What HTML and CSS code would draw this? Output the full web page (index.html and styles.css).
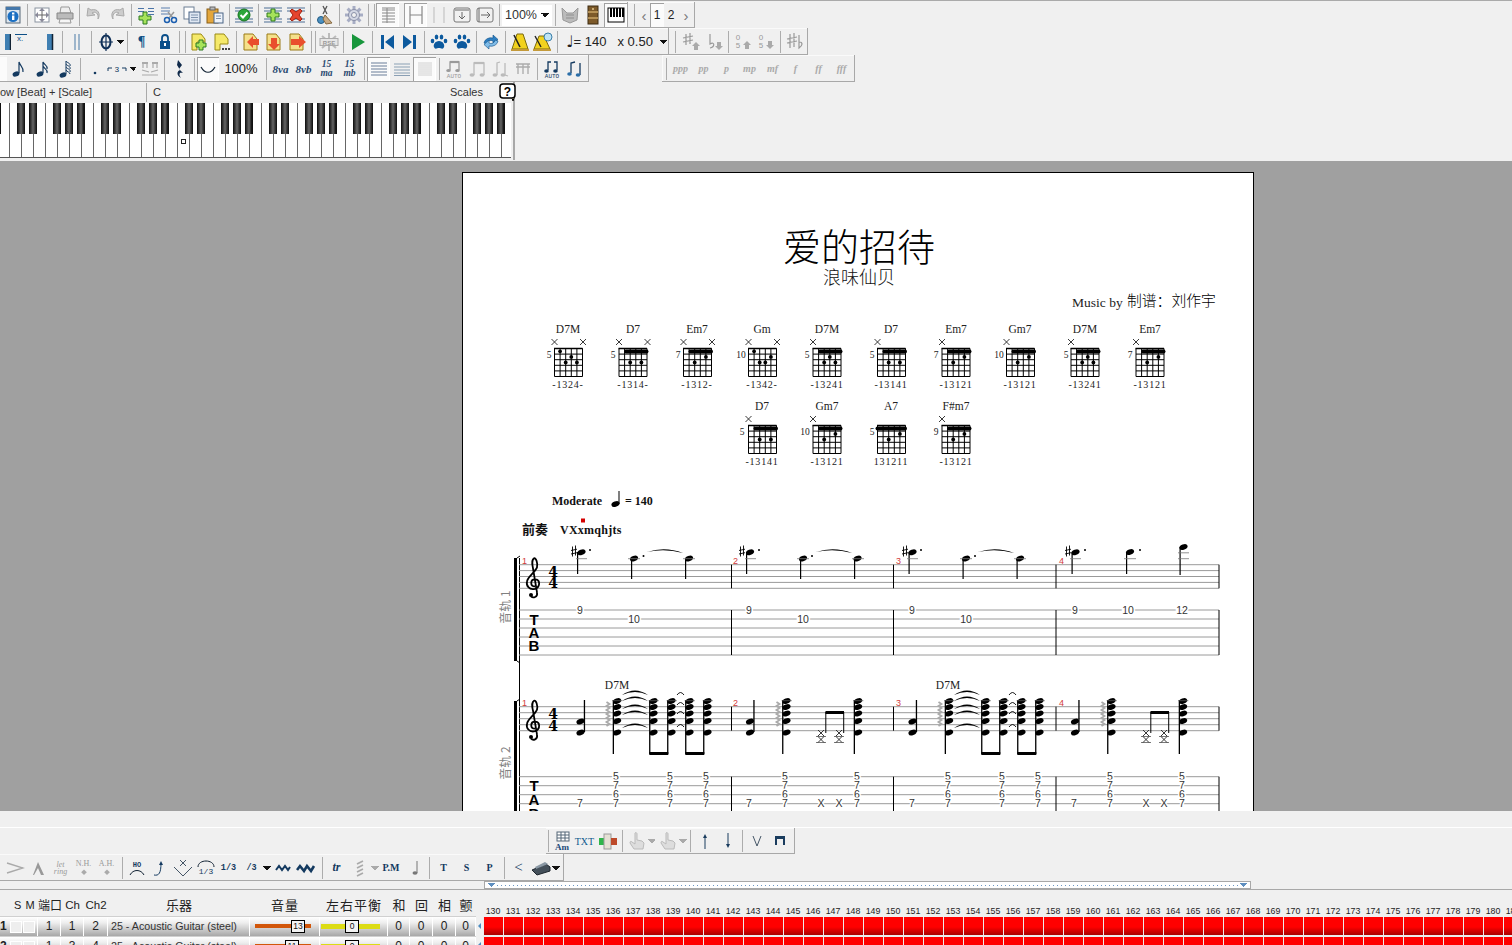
FILE: index.html
```html
<!DOCTYPE html>
<html lang="zh">
<head>
<meta charset="utf-8">
<title>爱的招待</title>
<link rel="stylesheet" href="styles.css">
</head>
<body>
<svg class="sprite" aria-hidden="true">
<defs>
<symbol id="info" viewBox="0 0 20 20"><rect x="3" y="2" width="14" height="16" fill="#dde6ef" stroke="#567"/><rect x="3" y="2" width="14" height="3" fill="#47a"/><circle cx="10" cy="11.5" r="5.5" fill="#1b6fc2"/><rect x="9" y="10.5" width="2.4" height="4.5" fill="#fff"/><rect x="9" y="7.5" width="2.4" height="2" fill="#fff"/></symbol>
<symbol id="move" viewBox="0 0 20 20"><rect x="3" y="3" width="14" height="14" fill="#fff" stroke="#8a93a0"/><path d="M10 3.5v13M3.5 10h13" stroke="#666"/><path d="M10 3l-3 3h6zM10 17l-3-3h6zM3 10l3-3v6zM17 10l-3-3v6z" fill="#889"/></symbol>
<symbol id="print" viewBox="0 0 20 20"><path d="M6 2h8l2 6H5z" fill="#eee" stroke="#999"/><path d="M2 8h16v6H2z" fill="#bbb" stroke="#888"/><path d="M5 14h10l1 4H4z" fill="#f6f6f6" stroke="#999"/></symbol>
<symbol id="undo" viewBox="0 0 20 20"><path d="M4 3l-1 8 8-1-3-2c3-2 7 0 6 6 3-5 0-11-7-9z" fill="#ccc" stroke="#aaa"/></symbol>
<symbol id="redo" viewBox="0 0 20 20"><path d="M16 3l1 8-8-1 3-2c-3-2-7 0-6 6-3-5 0-11 7-9z" fill="#ccc" stroke="#aaa"/></symbol>
<symbol id="addt" viewBox="0 0 20 20"><path d="M2 3.5h6M12 3.5h6M2 6.5h6M12 6.5h6M12 9.5h6" stroke="#4a74a8"/><path d="M7 7h4v4h4v4h-4v4H7v-4H3v-4h4z" fill="#a6e35a" stroke="#2c7a22"/></symbol>
<symbol id="scis" viewBox="0 0 20 20"><path d="M2 3h9M2 6h9M2 9h9" stroke="#5a7fae"/><path d="M9 7l5 6M15 7l-5 6" stroke="#999" stroke-width="1.5"/><circle cx="8" cy="15" r="2.5" fill="none" stroke="#1c5fb0" stroke-width="1.5"/><circle cx="15" cy="15" r="2.5" fill="none" stroke="#1c5fb0" stroke-width="1.5"/></symbol>
<symbol id="copy" viewBox="0 0 20 20"><rect x="2" y="2" width="10" height="12" fill="#fff" stroke="#6d7f94"/><rect x="7" y="7" width="11" height="11" fill="#dfe7f2" stroke="#4a6486"/><path d="M9 10h7M9 12.5h7M9 15h7" stroke="#7f93ad"/></symbol>
<symbol id="paste" viewBox="0 0 20 20"><rect x="2" y="4" width="11" height="14" fill="#e3a63c" stroke="#8a5e16"/><rect x="5" y="2" width="5" height="3" fill="#bbb" stroke="#666"/><rect x="9" y="8" width="9" height="10" fill="#eef3fa" stroke="#4a6486"/><path d="M11 11h5M11 13.5h5" stroke="#7f93ad"/></symbol>
<symbol id="chk" viewBox="0 0 20 20"><path d="M1 3h18M1 6h18M1 14h18M1 17h18" stroke="#4d6f95"/><circle cx="10" cy="10" r="6" fill="#2ca53a" stroke="#14721f"/><path d="M6.5 10l2.5 2.5 4.5-5" stroke="#fff" stroke-width="2" fill="none"/></symbol>
<symbol id="add2" viewBox="0 0 20 20"><path d="M1 3h18M1 6h18M1 14h18M1 17h18" stroke="#4d6f95"/><path d="M8 4h4v4h4v4h-4v4H8v-4H4V8h4z" fill="#a6e35a" stroke="#2c7a22"/></symbol>
<symbol id="del2" viewBox="0 0 20 20"><path d="M1 3h18M1 6h18M1 14h18M1 17h18" stroke="#4d6f95"/><path d="M6 4l4 3 4-3 2 2-3 4 3 4-2 2-4-3-4 3-2-2 3-4-3-4z" fill="#e6442e" stroke="#a3210f"/></symbol>
<symbol id="cut" viewBox="0 0 20 20"><path d="M12 1L8 9M8 1l4 8" stroke="#555" stroke-width="1.3"/><circle cx="6" cy="15" r="3.5" fill="#4a90c2" stroke="#245b82"/><path d="M10 10l7 8-6 1-3-5z" fill="#c9ab85" stroke="#86693f"/></symbol>
<symbol id="gear" viewBox="0 0 20 20"><path d="M10 1v18M1 10h18M3.6 3.6l12.8 12.8M16.4 3.6L3.6 16.4" stroke="#a7adc4" stroke-width="3"/><circle cx="10" cy="10" r="5.5" fill="#d3d7e4" stroke="#8a90a8"/><circle cx="10" cy="10" r="2.5" fill="#f1f1f1" stroke="#8a90a8"/></symbol>
<symbol id="list" viewBox="0 0 20 20"><path d="M4 5h13M4 8h13M4 11h13M4 14h13M4 17h13M9 3v15M4 3h13" stroke="#888"/></symbol>
<symbol id="hh" viewBox="0 0 20 20"><path d="M4 1v18M16 1v18M4 10h12" stroke="#888" stroke-width="1.2"/></symbol>
<symbol id="vv" viewBox="0 0 20 20"><path d="M5 2v16M15 2v16" stroke="#bbb"/></symbol>
<symbol id="bxd" viewBox="0 0 20 20"><rect x="2" y="3" width="16" height="14" rx="2" fill="#f1f1f1" stroke="#777"/><path d="M3 5h14M10 7v7M7 11l3 3 3-3" stroke="#666" fill="none"/></symbol>
<symbol id="bxr" viewBox="0 0 20 20"><rect x="2" y="3" width="16" height="14" rx="2" fill="#f1f1f1" stroke="#777"/><path d="M4 3v14M6 10h9M12 7l3 3-3 3" stroke="#666" fill="none"/></symbol>
<symbol id="cat" viewBox="0 0 20 20"><path d="M2 3l5 5h6l5-5-1 12-7 3-7-3z" fill="#bbb" stroke="#999"/><path d="M6 10h8M6 13h8" stroke="#8f8f8f"/></symbol>
<symbol id="wood" viewBox="0 0 20 20"><rect x="5" y="1" width="10" height="18" fill="#7d5a2a" stroke="#3d2a10"/><path d="M5 7h10M5 13h10" stroke="#c9a566" stroke-width="1.6"/><circle cx="10" cy="4" r="1" fill="#e5c88e"/></symbol>
<symbol id="kb" viewBox="0 0 20 20"><rect x="2" y="3" width="16" height="14" fill="#fff" stroke="#000"/><path d="M5 3v9M8 3v9M11 3v9M14 3v9M17 3v9" stroke="#000" stroke-width="2"/></symbol>
<symbol id="rs" viewBox="0 0 20 20"><path d="M2 2h12v1H2z" fill="#0d4f86"/><text x="4" y="9" class="svt">x.</text></symbol>
<symbol id="rr" viewBox="0 0 20 20"><path d="M4 7h.01M4 13h.01" stroke="#0d4f86" stroke-width="2"/><path d="M9 2h5v16H9z" fill="#3f7fb2"/><path d="M14.5 2v16" stroke="#123" stroke-width="1.5"/></symbol>
<symbol id="bar2" viewBox="0 0 20 20"><path d="M8 2v16M12 2v16" stroke="#4a7ba6"/></symbol>
<symbol id="coda" viewBox="0 0 20 20"><path d="M10 1v18M3 10h14" stroke="#0f2f57" stroke-width="1.2"/><ellipse cx="10" cy="10" rx="4.5" ry="6.5" fill="none" stroke="#0f2f57" stroke-width="2"/></symbol>
<symbol id="lock" viewBox="0 0 20 20"><path d="M7 9V6a3 3 0 0 1 6 0v3" fill="none" stroke="#0b4f8a" stroke-width="1.8"/><rect x="5" y="9" width="10" height="8" fill="#0b4f8a"/><rect x="9" y="11" width="2" height="3" fill="#fff"/></symbol>
<symbol id="npl" viewBox="0 0 20 20"><path d="M3 2h9l4 5v3H8v8H3z" fill="#f5e96a" stroke="#9a8a16"/><path d="M10 8h4v3h3v4h-3v3h-4v-3H7v-4h3z" fill="#a6e35a" stroke="#2c7a22"/></symbol>
<symbol id="ndt" viewBox="0 0 20 20"><path d="M3 2h9l4 5v5H8v6H3z" fill="#f5e96a" stroke="#9a8a16"/><path d="M10 16h2v2h-2zM13 16h2v2h-2zM16 16h2v2h-2z" fill="#444"/></symbol>
<symbol id="nl" viewBox="0 0 20 20"><path d="M3 2h9l4 5v11H3z" fill="#f5e08a" stroke="#9a7a16"/><path d="M18 7v6h-6v3L6 10l6-6v3z" fill="#e94f2d"/></symbol>
<symbol id="nd" viewBox="0 0 20 20"><path d="M3 2h9l4 5v11H3z" fill="#f5e08a" stroke="#9a7a16"/><path d="M7 6h6v6h3l-6 6-6-6h3z" fill="#e94f2d"/></symbol>
<symbol id="nr" viewBox="0 0 20 20"><path d="M3 2h9l4 5v11H3z" fill="#f5e08a" stroke="#9a7a16"/><path d="M4 7v6h8v3l7-6-7-6v3z" fill="#e94f2d"/></symbol>
<symbol id="rse" viewBox="0 0 20 20"><path d="M10 1v18M3 4l14 12M17 4L3 16" stroke="#bbb" stroke-width="2"/><rect x="1" y="6.500" width="18" height="7" fill="#e6e6e6" stroke="#aaa"/><text x="10" y="12.500" class="svs">RSE</text></symbol>
<symbol id="play" viewBox="0 0 20 20"><path d="M4 2l13 8-13 8z" fill="#18963c"/></symbol>
<symbol id="first" viewBox="0 0 20 20"><path d="M4 3h3v14H4zM17 3v14L8 10z" fill="#0d5a9e"/></symbol>
<symbol id="last" viewBox="0 0 20 20"><path d="M16 3h-3v14h3zM3 3v14l9-7z" fill="#0d5a9e"/></symbol>
<symbol id="paw" viewBox="0 0 20 20"><path d="M10 9c4 0 6 4 5 6-1 3-3 1-5 1s-4 2-5-1c-1-2 1-6 5-6z" fill="#0d5a9e"/><ellipse cx="3.500" cy="9" rx="1.800" ry="2.300" fill="#0d5a9e"/><ellipse cx="7.500" cy="5" rx="1.800" ry="2.500" fill="#0d5a9e"/><ellipse cx="12.500" cy="5" rx="1.800" ry="2.500" fill="#0d5a9e"/><ellipse cx="16.500" cy="9" rx="1.800" ry="2.300" fill="#0d5a9e"/></symbol>
<symbol id="loop" viewBox="0 0 20 20"><path d="M3 11a7 6 0 0 1 9-5V3l5 4.500-5 4.500V9a4 4 0 0 0-6 3z" fill="#2d7fc2" stroke="#0d4f86" stroke-width=".6"/><path d="M17 9a7 6 0 0 1-9 5v3l-5-4.500L8 8v3a4 4 0 0 0 6-3z" fill="#80bce8" stroke="#0d4f86" stroke-width=".6"/></symbol>
<symbol id="met" viewBox="0 0 20 20"><path d="M7 2h6l5 15H2z" fill="#f2d21e" stroke="#7a6a10"/><path d="M1 17h18v2H1z" fill="#c49a3a"/><path d="M10 15L4 3" stroke="#222" stroke-width="1.6"/></symbol>
<symbol id="met2" viewBox="0 0 20 20"><path d="M6 4h5l6 13H1z" fill="#f2d21e" stroke="#7a6a10"/><path d="M0 17h18v2H0z" fill="#c49a3a"/><path d="M8 15L2 4" stroke="#222" stroke-width="1.4"/><circle cx="15" cy="5" r="4" fill="#bfe3f5" stroke="#3a7ea8"/></symbol>
<symbol id="shu" viewBox="0 0 20 20"><path d="M5 2v11M9 1v11M2 6l10-2M2 10l10-2" stroke="#999" stroke-width="1.200"/><path d="M15 10l4 4h-2v4h-4v-4h-2z" fill="#aaa"/></symbol>
<symbol id="fld" viewBox="0 0 20 20"><path d="M6 2v10c5-3 5 3 0 4" fill="none" stroke="#999" stroke-width="1.200"/><path d="M13 10h4v4h2l-4 4-4-4h2z" fill="#aaa"/></symbol>
<symbol id="o5u" viewBox="0 0 20 20"><text x="5" y="8" class="svg5">0</text><text x="5" y="16" class="svg5">5</text><path d="M14 9l4 4h-2v4h-4v-4h-2z" fill="#aaa"/></symbol>
<symbol id="o5d" viewBox="0 0 20 20"><text x="5" y="8" class="svg5">0</text><text x="5" y="16" class="svg5">5</text><path d="M12 9h4v4h2l-4 4-4-4h2z" fill="#aaa"/></symbol>
<symbol id="shfl" viewBox="0 0 20 20"><path d="M5 2v14M9 1v14M2 7l10-2M2 11l10-2M14 3v13c4-3 4-6 0-6" fill="none" stroke="#999" stroke-width="1.200"/></symbol>
<symbol id="n8" viewBox="0 0 20 20"><ellipse cx="7" cy="15" rx="3.500" ry="2.500" transform="rotate(-20 7 15)" fill="#143a60"/><path d="M10 14V3c1 4 5 5 4 10" fill="none" stroke="#143a60" stroke-width="1.200"/></symbol>
<symbol id="n16" viewBox="0 0 20 20"><ellipse cx="7" cy="15" rx="3.500" ry="2.500" transform="rotate(-20 7 15)" fill="#143a60"/><path d="M10 14V3c1 3 5 3 4 7M10 7c1 3 5 3 4 7" fill="none" stroke="#143a60" stroke-width="1.200"/></symbol>
<symbol id="n32" viewBox="0 0 20 20"><ellipse cx="7" cy="16" rx="3.500" ry="2.500" transform="rotate(-20 7 16)" fill="#143a60"/><path d="M10 15V2c1 2 5 2 4 5M10 5c1 2 5 2 4 5M10 8c1 2 5 2 4 5M10 11c1 2 4 2 4 4" fill="none" stroke="#143a60"/></symbol>
<symbol id="dot" viewBox="0 0 20 20"><circle cx="10" cy="14" r="1.300" fill="#143a60"/></symbol>
<symbol id="r3" viewBox="0 0 20 20"><path d="M1 12V9h4M15 9h4v3" stroke="#143a60" fill="none"/><text x="10" y="12.500" class="svt3">3</text></symbol>
<symbol id="aa" viewBox="0 0 20 20"><path d="M2 3h6v2H2zM12 3h6v2h-6z" fill="#aaa"/><path d="M3 5v4M7 5v4M13 5v4M17 5v4M2 11l7 2M11 13l7-2M2 16h16" stroke="#aaa" stroke-width="1.200" fill="none"/></symbol>
<symbol id="rest" viewBox="0 0 20 20"><path d="M8 1l4 5-3 4 4 4c-3-1-5 0-2 5-5-3-4-7-1-8L7 6z" fill="#102a4a"/></symbol>
<symbol id="slur" viewBox="0 0 20 20"><path d="M3 8c4 7 10 7 14 0" fill="none" stroke="#123" stroke-width="1.200"/></symbol>
<symbol id="l1" viewBox="0 0 20 20"><path d="M2 4h16M2 7h16M2 10h16M2 13h16M2 16h16" stroke="#6a7f9a" stroke-width="1.200"/></symbol>
<symbol id="l2" viewBox="0 0 20 20"><path d="M2 5h16M2 8h16M2 11h16M2 14h16M2 16.500h16" stroke="#8a9fb4" stroke-width="1.200"/></symbol>
<symbol id="l3" viewBox="0 0 20 20"><path d="M3 4h14M3 6h14M3 8h14M3 10h14M3 12h14M3 14h14M3 16h14" stroke="#d0d0d0"/></symbol>
<symbol id="au" viewBox="0 0 20 20"><path d="M6 11V3h9v8" fill="none" stroke="#999" stroke-width="1.300"/><path d="M6 3h9" stroke="#999" stroke-width="2.200"/><ellipse cx="4.500" cy="11.500" rx="2.300" ry="1.600" fill="#999"/><ellipse cx="13.500" cy="11.500" rx="2.300" ry="1.600" fill="#999"/><text x="10" y="19" class="sva">AUTO</text></symbol>
<symbol id="bm1" viewBox="0 0 20 20"><path d="M7 16V4h10v12" fill="none" stroke="#bbb" stroke-width="1.300"/><path d="M7 4h10" stroke="#bbb" stroke-width="2.200"/><ellipse cx="5" cy="16" rx="2.500" ry="1.800" fill="#bbb"/><ellipse cx="15" cy="16" rx="2.500" ry="1.800" fill="#bbb"/></symbol>
<symbol id="bm2" viewBox="0 0 20 20"><path d="M7 16V4l3-1M15 4v12l3 1" fill="none" stroke="#bbb" stroke-width="1.300"/><ellipse cx="5" cy="16" rx="2.500" ry="1.800" fill="#bbb"/><ellipse cx="13" cy="16" rx="2.500" ry="1.800" fill="#bbb"/></symbol>
<symbol id="bm3" viewBox="0 0 20 20"><path d="M3 5h14M3 8h14M5 5v10M10 5v10M15 5v10" stroke="#aaa" stroke-width="1.300"/></symbol>
<symbol id="af" viewBox="0 0 20 20"><path d="M6 11V3h3M15 11V3h-3" fill="none" stroke="#143a60" stroke-width="1.300"/><ellipse cx="4.500" cy="12" rx="2.300" ry="1.700" fill="#143a60"/><ellipse cx="13.500" cy="12" rx="2.300" ry="1.700" fill="#143a60"/><text x="10" y="19" class="svb">AUTO</text></symbol>
<symbol id="sb" viewBox="0 0 20 20"><path d="M6 14V4l4-1M15 16V4" fill="none" stroke="#143a60" stroke-width="1.300"/><ellipse cx="4.500" cy="15" rx="2.300" ry="1.800" fill="#2b6ea8"/><ellipse cx="13" cy="16" rx="2.300" ry="1.800" fill="#2b6ea8"/></symbol>
<symbol id="qm" viewBox="0 0 20 20"><rect x="2" y="2" width="15" height="14" rx="3" fill="#fff" stroke="#000" stroke-width="1.500"/><path d="M14 16l1 3 1-3" fill="#fff5b8" stroke="#000"/><text x="9.500" y="13.500" class="svq">?</text></symbol>
<symbol id="am" viewBox="0 0 20 20"><rect x="5" y="1" width="12" height="9" fill="#fff" stroke="#567"/><path d="M5 4h12M5 7h12M9 1v9M13 1v9" stroke="#567"/><text x="10" y="19" class="svam">Am</text></symbol>
<symbol id="mix" viewBox="0 0 20 20"><rect x="1" y="7" width="6" height="7" fill="#2fb54a"/><rect x="6" y="3" width="7" height="15" fill="#e5e0d4" stroke="#999"/><rect x="13" y="7" width="6" height="7" fill="#bd4a2a"/></symbol>
<symbol id="hand" viewBox="0 0 20 20"><path d="M8 2c1-1 2 0 2 1v6l5 1 2 2-1 6H7L3 12c0-2 1-2 2-1l3 2z" fill="#ddd" stroke="#bbb"/></symbol>
<symbol id="up" viewBox="0 0 20 20"><path d="M10 18V5" stroke="#1a3c5e"/><path d="M8 7l2-4 2 4z" fill="#1a3c5e"/></symbol>
<symbol id="dn" viewBox="0 0 20 20"><path d="M10 2v13" stroke="#1a3c5e"/><path d="M8 13l2 4 2-4z" fill="#1a3c5e"/></symbol>
<symbol id="vv2" viewBox="0 0 20 20"><path d="M6 5l4 10 4-10" fill="none" stroke="#456"/></symbol>
<symbol id="dn2" viewBox="0 0 20 20"><path d="M5 5h10v9h-2V8H7v6H5z" fill="#1a3c5e"/></symbol>
<symbol id="acc" viewBox="0 0 20 20"><path d="M2 5l16 5-16 5" fill="none" stroke="#aaa" stroke-width="1.400"/></symbol>
<symbol id="mar" viewBox="0 0 20 20"><path d="M10 4l6 13h-3l-3-7-4 7H5z" fill="#999"/></symbol>
<symbol id="dia" viewBox="0 0 20 20"><path d="M10 12l4 4-4 4-4-4z" fill="#aaa"/></symbol>
<symbol id="ho" viewBox="0 0 20 20"><path d="M3 17c3-6 11-6 14 0" fill="none" stroke="#123"/><text x="10" y="9" class="svho">HO</text></symbol>
<symbol id="arr" viewBox="0 0 20 20"><path d="M4 17c5 1 7-2 7-12" stroke="#143a60" fill="none"/><path d="M9 7l2-4 2 4z" fill="#143a60"/></symbol>
<symbol id="xv" viewBox="0 0 20 20"><path d="M7 2l6 6M13 2L7 8M1 9l9 9 9-9" stroke="#456" fill="none"/></symbol>
<symbol id="arc13" viewBox="0 0 20 20"><path d="M2 9c0-8 16-8 16 0" fill="none" stroke="#123"/><text x="10" y="16" class="svt3">1/3</text></symbol>
<symbol id="w1" viewBox="0 0 20 20"><path d="M3 12l3-4 3 4 3-4 3 4 2-3" fill="none" stroke="#143a60" stroke-width="2"/></symbol>
<symbol id="w2" viewBox="0 0 20 20"><path d="M1 12l3-4 4 5 3-5 4 5 3-5" fill="none" stroke="#143a60" stroke-width="2.600"/></symbol>
<symbol id="trem" viewBox="0 0 20 20"><path d="M7 6l6-3M7 10l6-3M7 14l6-3M7 18l6-3" stroke="#aaa" stroke-width="1.700"/></symbol>
<symbol id="nt" viewBox="0 0 20 20"><path d="M12 3v12" stroke="#777"/><ellipse cx="10" cy="15" rx="2.500" ry="1.800" fill="#777"/><path d="M8 19h.01" stroke="#aaa" stroke-width="2"/></symbol>
<symbol id="ped" viewBox="0 0 20 20"><path d="M1 12l14-6 4 3v4L6 17z" fill="#44505a" stroke="#1d252c"/><path d="M4 9l10-5 3 2-12 5z" fill="#8a98a4"/></symbol>
<ellipse id="h" rx="4.200" ry="2.700" transform="rotate(-20)"/>
<g id="ch5"><path d="M0 0h28M0 5.600h28M0 11.200h28M0 16.800h28M0 22.400h28M0 28h28M0 0v28M5.600 0v28M11.200 0v28M16.800 0v28M22.400 0v28M28 0v28" stroke="#000" stroke-width="1" fill="none"/><path d="M-.5 0h28.500" stroke="#000" stroke-width="1.500"/></g>
<path id="xm" d="M-3-3L3 3M3-3L-3 3" stroke="#222" stroke-width=".9"/>
<g id="bar"><use href="#ch5"/><rect x="5" y="1" width="24.500" height="4" rx="2"/></g>
<g id="f3"><circle cx="11.200" cy="14" r="1.900"/><circle cx="22.400" cy="14" r="1.900"/></g>
<path id="sh" d="M-1.500-5.500v10M1.500-6.500v10M-3-1.500l6-1.300M-3 2l6-1.300" stroke="#000" stroke-width=".9"/>
<g id="c"><rect x="-.6" y="700" width="1.300" height="54"/><use href="#h" x="3.800" y="701"/><use href="#h" x="3.800" y="707"/><use href="#h" x="3.800" y="713.500"/><use href="#h" x="3.800" y="721"/><use href="#h" x="3.800" y="732.500"/><path d="M-1 700.700h10" stroke="#555" stroke-width=".8"/></g>
<g id="lowc"><use href="#h" x="0" y="721.500"/><use href="#h" x="0" y="732.500"/><rect x="3.300" y="700" width="1.300" height="32"/></g>
<path id="roll" d="M-1.500 702l3 2-3 2 3 2-3 2 3 2-3 2 3 2-3 2 3 2-3 2 3 2-3 2" fill="none" stroke="#aaa" stroke-width="1.800"/>
<g id="t5"><text class="tn" y="780">5</text><text class="tn" y="789">7</text><text class="tn" y="798">6</text><text class="tn" y="807">7</text></g>
<g id="tie"><path d="M0 0Q13-9 26 0Q13-6 0 0z"/></g>
<g id="barA">
<use href="#lowc" x="580.500"/>
<use href="#roll" x="608"/><use href="#c" x="613.300"/><use href="#c" x="649.700"/><use href="#c" x="667.700"/><use href="#c" x="685.700"/><use href="#c" x="703.700"/>
<rect x="649.300" y="752" width="19" height="3"/><rect x="685.300" y="752" width="19" height="3"/>
<use href="#tie" x="622" y="695"/><use href="#tie" x="622" y="701"/><use href="#tie" x="622" y="709"/><use href="#tie" x="622" y="715"/><use href="#tie" x="622" y="728"/>
<path d="M677 695q3.500-5 7 0M677 705q3.500-5 7 0M677 714q3.500-5 7 0M677 727q3.500-5 7 0" fill="none" stroke="#000" stroke-width=".9"/>
<use href="#t5" x="616"/><use href="#t5" x="670"/><use href="#t5" x="706"/><text class="tn" x="580" y="807">7</text>
</g>
<g id="barB">
<use href="#lowc" x="750"/>
<use href="#roll" x="778"/><use href="#c" x="782.700"/><use href="#c" x="854.300"/>
<rect x="825.500" y="711" width="18.500" height="3"/><rect x="825.300" y="712" width="1" height="21"/><rect x="843.200" y="712" width="1" height="21"/>
<path d="M816 736.500h10M834 736.500h10M816 742.500h10M834 742.500h10" stroke="#555" stroke-width=".8"/>
<use href="#xm" x="821" y="733"/><use href="#xm" x="821" y="739.500"/><use href="#xm" x="839" y="733"/><use href="#xm" x="839" y="739.500"/>
<use href="#t5" x="785"/><use href="#t5" x="857"/><text class="tn" x="749" y="807">7</text><text class="tn" x="821" y="807">X</text><text class="tn" x="839" y="807">X</text>
</g>
<path id="clef" d="M1 4C-4 4-4-3 1-3C6-3 7 4 1 6.500C-5 8-8 3-7-1C-6-6 1-10 3-15C4-19 2-25 0-24C-2-23-2-18-1-14L3 10C4 15-1 16-3 14" fill="none" stroke="#000" stroke-width="1.800"/>
</defs>
</svg>

<header class="top">
<div class="row">
<div class="tb p1">
<span class="btn"><svg class="i"><use href="#info"/></svg></span><i class="sep"></i>
<span class="btn"><svg class="i"><use href="#move"/></svg></span><span class="btn"><svg class="i"><use href="#print"/></svg></span><i class="sep"></i>
<span class="btn"><svg class="i"><use href="#undo"/></svg></span><span class="btn"><svg class="i"><use href="#redo"/></svg></span><i class="sep"></i>
<span class="btn"><svg class="i"><use href="#addt"/></svg></span><span class="btn"><svg class="i"><use href="#scis"/></svg></span><span class="btn"><svg class="i"><use href="#copy"/></svg></span><span class="btn"><svg class="i"><use href="#paste"/></svg></span><i class="sep"></i>
<span class="btn"><svg class="i"><use href="#chk"/></svg></span><i class="sep"></i>
<span class="btn"><svg class="i"><use href="#add2"/></svg></span><span class="btn"><svg class="i"><use href="#del2"/></svg></span><i class="sep"></i>
<span class="btn"><svg class="i"><use href="#cut"/></svg></span><i class="sep"></i>
<span class="btn"><svg class="i"><use href="#gear"/></svg></span><i class="sep"></i>
<i class="grip w5"></i><span class="btn on"><svg class="i"><use href="#list"/></svg></span><i class="w5"></i><span class="btn on"><svg class="i"><use href="#hh"/></svg></span><span class="btn"><svg class="i"><use href="#vv"/></svg></span>
<span class="btn"><svg class="i"><use href="#bxd"/></svg></span><span class="btn"><svg class="i"><use href="#bxr"/></svg></span><i class="sep"></i>
<span class="combo"><span>100%</span><b class="caret w8"></b></span><i class="sep"></i>
<span class="btn"><svg class="i"><use href="#cat"/></svg></span><span class="btn"><svg class="i"><use href="#wood"/></svg></span><span class="btn on"><svg class="i"><use href="#kb"/></svg></span><i class="w1"></i>
</div>
<div class="tb">
<i class="grip w10"></i><span class="pg">‹</span><span class="pgn on">1</span><span class="pgn">2</span><i class="w2"></i><span class="pg">›</span><i class="w3"></i>
</div>
</div>

<div class="row">
<div class="tb">
<span class="btn w11"><svg class="i"><use href="#rr"/></svg></span><span class="btn"><svg class="i"><use href="#rs"/></svg></span><i class="w2"></i><span class="btn"><svg class="i"><use href="#rr"/></svg></span><i class="sep"></i>
<span class="btn"><svg class="i"><use href="#bar2"/></svg></span><i class="sep"></i>
<span class="btn"><svg class="i"><use href="#coda"/></svg></span><b class="caret w7"></b><i class="sep"></i>
<span class="btn"><span class="para">¶</span></span><span class="btn"><svg class="i"><use href="#lock"/></svg></span><i class="sep"></i>
<i class="grip w5"></i>
<span class="btn"><svg class="i"><use href="#npl"/></svg></span><span class="btn"><svg class="i"><use href="#ndt"/></svg></span><i class="sep"></i>
<span class="btn"><svg class="i"><use href="#nl"/></svg></span><span class="btn"><svg class="i"><use href="#nd"/></svg></span><span class="btn"><svg class="i"><use href="#nr"/></svg></span><i class="sep"></i>
<i class="grip w3"></i>
<span class="btn"><svg class="i"><use href="#rse"/></svg></span><i class="sep"></i>
<span class="btn"><svg class="i"><use href="#play"/></svg></span><i class="sep"></i>
<span class="btn"><svg class="i"><use href="#first"/></svg></span><span class="btn"><svg class="i"><use href="#last"/></svg></span><i class="sep"></i>
<span class="btn"><svg class="i"><use href="#paw"/></svg></span><span class="btn"><svg class="i"><use href="#paw"/></svg></span><i class="sep"></i>
<span class="btn"><svg class="i"><use href="#loop"/></svg></span><i class="sep"></i>
<span class="btn"><svg class="i"><use href="#met"/></svg></span><span class="btn"><svg class="i"><use href="#met2"/></svg></span><i class="sep"></i>
<span class="tempo"><span class="qn">♩</span><span>= 140</span><span class="mul">x 0.50</span><b class="caret w8"></b></span>
</div>
<div class="tb">
<i class="grip w10"></i><span class="btn"><svg class="i"><use href="#shu"/></svg></span><span class="btn"><svg class="i"><use href="#fld"/></svg></span><i class="sep"></i>
<span class="btn"><svg class="i"><use href="#o5u"/></svg></span><span class="btn"><svg class="i"><use href="#o5d"/></svg></span><i class="sep"></i>
<span class="btn"><svg class="i"><use href="#shfl"/></svg></span><i class="w2"></i>
</div>
</div>

<div class="row">
<div class="tb">
<i class="w7 onclip"></i>
<span class="btn"><svg class="i"><use href="#n8"/></svg></span><i class="w1"></i><span class="btn"><svg class="i"><use href="#n16"/></svg></span><span class="btn"><svg class="i"><use href="#n32"/></svg></span><i class="sep"></i>
<span class="btn"><svg class="i"><use href="#dot"/></svg></span><span class="btn w22"><svg class="i"><use href="#r3"/></svg></span><b class="caret w10"></b><span class="btn"><svg class="i"><use href="#aa"/></svg></span><i class="sep"></i><i class="w1"></i>
<span class="btn"><svg class="i"><use href="#rest"/></svg></span><i class="sep"></i>
<span class="btn on w22"><svg class="i"><use href="#slur"/></svg></span><span class="pct">100%</span><i class="sep"></i>
<span class="btn"><span class="oct">8va</span></span><span class="btn"><span class="oct">8vb</span></span><span class="btn"><span class="oc2">15<br>ma</span></span><span class="btn"><span class="oc2">15<br>mb</span></span><i class="sep"></i>
<span class="btn on"><svg class="i"><use href="#l1"/></svg></span><span class="btn"><svg class="i"><use href="#l2"/></svg></span><span class="btn on"><svg class="i"><use href="#l3"/></svg></span><i class="sep"></i>
<span class="btn"><svg class="i"><use href="#au"/></svg></span><span class="btn"><svg class="i"><use href="#bm1"/></svg></span><span class="btn"><svg class="i"><use href="#bm2"/></svg></span><span class="btn"><svg class="i"><use href="#bm3"/></svg></span><i class="sep"></i>
<span class="btn"><svg class="i"><use href="#af"/></svg></span><span class="btn"><svg class="i"><use href="#sb"/></svg></span><i class="w3"></i>
</div>
<div class="tb dyn">
<i class="grip w7"></i>
<span class="btn dy">ppp</span><span class="btn dy">pp</span><span class="btn dy">p</span><span class="btn dy">mp</span><span class="btn dy">mf</span><span class="btn dy">f</span><span class="btn dy">ff</span><span class="btn dy">fff</span><i class="w2"></i>
</div>
</div>

<section class="piano">
<div class="phead"><span class="p-l">ow [Beat] + [Scale]</span><span class="p-c">C</span><span class="p-s">Scales</span><svg class="i q"><use href="#qm"/></svg></div>
<div class="keys"><i class="mark"></i></div>
</section>
</header>

<main class="score">
<div class="page">
<svg class="sheet" viewBox="463 173 790 638">
<text class="title" x="859" y="260.500">爱的招待</text>
<text class="sub" x="859" y="284">浪味仙贝</text>
<text class="mus" x="1072" y="307">Music by</text><text class="cre" x="1127" y="306">制谱：刘作宇</text>

<g class="chords">
<text class="nm" x="568" y="333">D7M</text><use href="#xm" x="554.500" y="342"/><use href="#xm" x="583" y="342"/><text class="fr" x="549" y="358">5</text>
<g transform="translate(554.500 348.500)"><use href="#ch5"/><circle cx="5.600" cy="2.800" r="1.900"/><circle cx="16.800" cy="8.400" r="1.900"/><use href="#f3"/></g><text class="lb" x="568" y="388">-1324-</text>

<text class="nm" x="633" y="333">D7</text><use href="#xm" x="619" y="342"/><use href="#xm" x="647.500" y="342"/><text class="fr" x="613" y="358">5</text>
<g transform="translate(619 348.500)"><use href="#bar"/><use href="#f3"/></g><text class="lb" x="633" y="388">-1314-</text>

<text class="nm" x="697" y="333">Em7</text><use href="#xm" x="683.500" y="342"/><use href="#xm" x="712" y="342"/><text class="fr" x="678" y="358">7</text>
<g transform="translate(683.500 348.500)"><use href="#bar"/><circle cx="11.200" cy="14" r="1.900"/><circle cx="22.400" cy="8.400" r="1.900"/></g><text class="lb" x="697" y="388">-1312-</text>

<text class="nm" x="762" y="333">Gm</text><use href="#xm" x="748.500" y="342"/><use href="#xm" x="777" y="342"/><text class="fr" x="741" y="358">10</text>
<g transform="translate(748.500 348.500)"><use href="#ch5"/><circle cx="5.600" cy="2.800" r="1.900"/><circle cx="22.400" cy="8.400" r="1.900"/><circle cx="11.200" cy="14" r="1.900"/><circle cx="16.800" cy="14" r="1.900"/></g><text class="lb" x="762" y="388">-1342-</text>

<text class="nm" x="827" y="333">D7M</text><use href="#xm" x="813" y="342"/><text class="fr" x="807" y="358">5</text>
<g transform="translate(813 348.500)"><use href="#bar"/><circle cx="16.800" cy="8.400" r="1.900"/><use href="#f3"/></g><text class="lb" x="827" y="388">-13241</text>

<text class="nm" x="891" y="333">D7</text><use href="#xm" x="877.500" y="342"/><text class="fr" x="872" y="358">5</text>
<g transform="translate(877.500 348.500)"><use href="#bar"/><use href="#f3"/></g><text class="lb" x="891" y="388">-13141</text>

<text class="nm" x="956" y="333">Em7</text><use href="#xm" x="942" y="342"/><text class="fr" x="936" y="358">7</text>
<g transform="translate(942 348.500)"><use href="#bar"/><circle cx="11.200" cy="14" r="1.900"/><circle cx="22.400" cy="8.400" r="1.900"/></g><text class="lb" x="956" y="388">-13121</text>

<text class="nm" x="1020" y="333">Gm7</text><use href="#xm" x="1006.500" y="342"/><text class="fr" x="999" y="358">10</text>
<g transform="translate(1006.500 348.500)"><use href="#bar"/><circle cx="11.200" cy="14" r="1.900"/><circle cx="22.400" cy="8.400" r="1.900"/></g><text class="lb" x="1020" y="388">-13121</text>

<text class="nm" x="1085" y="333">D7M</text><use href="#xm" x="1071" y="342"/><text class="fr" x="1066" y="358">5</text>
<g transform="translate(1071 348.500)"><use href="#bar"/><circle cx="16.800" cy="8.400" r="1.900"/><use href="#f3"/></g><text class="lb" x="1085" y="388">-13241</text>

<text class="nm" x="1150" y="333">Em7</text><use href="#xm" x="1136" y="342"/><text class="fr" x="1130" y="358">7</text>
<g transform="translate(1136 348.500)"><use href="#bar"/><circle cx="11.200" cy="14" r="1.900"/><circle cx="22.400" cy="8.400" r="1.900"/></g><text class="lb" x="1150" y="388">-13121</text>

<text class="nm" x="762" y="410">D7</text><use href="#xm" x="748.500" y="419"/><text class="fr" x="742" y="435">5</text>
<g transform="translate(748.500 425.500)"><use href="#bar"/><use href="#f3"/></g><text class="lb" x="762" y="465">-13141</text>

<text class="nm" x="827" y="410">Gm7</text><use href="#xm" x="813" y="419"/><text class="fr" x="805" y="435">10</text>
<g transform="translate(813 425.500)"><use href="#bar"/><circle cx="11.200" cy="14" r="1.900"/><circle cx="22.400" cy="8.400" r="1.900"/></g><text class="lb" x="827" y="465">-13121</text>

<text class="nm" x="891" y="410">A7</text><text class="fr" x="872" y="435">5</text>
<g transform="translate(877.500 425.500)"><use href="#ch5"/><rect x="-2" y="1" width="31.500" height="4" rx="2"/><circle cx="11.200" cy="14" r="1.900"/><circle cx="22.400" cy="8.400" r="1.900"/></g><text class="lb" x="891" y="465">131211</text>

<text class="nm" x="956" y="410">F#m7</text><use href="#xm" x="942" y="419"/><text class="fr" x="936" y="435">9</text>
<g transform="translate(942 425.500)"><use href="#bar"/><circle cx="11.200" cy="14" r="1.900"/><circle cx="22.400" cy="8.400" r="1.900"/></g><text class="lb" x="956" y="465">-13121</text>
</g>

<text class="bd" x="552" y="505">Moderate</text>
<use href="#h" x="615.500" y="504"/><rect x="618.500" y="491" width="1" height="13"/>
<text class="bd" x="625" y="505">= 140</text>
<text class="bdc" x="522" y="534">前奏</text><text class="bd sp" x="560" y="534">VXxmqhjts</text>
<rect class="red" x="581" y="518.500" width="4" height="4"/>

<path class="brk" d="M514 558h3v103h-3z"/><path d="M517 558l3-2M517 661l3 2M519.500 558V811" stroke="#000" fill="none"/>

<path class="stf" d="M519 564.700H1219M519 570.600H1219M519 576.500H1219M519 582.400H1219M519 588.300H1219M519 610H1219M519 619H1219M519 628H1219M519 637H1219M519 646H1219M519 655H1219"/>
<path class="bln" d="M731.500 564.700V588.300M893.500 564.700V588.300M1056 564.700V588.300M1219 564.700V588.300M731.500 610V655M893.500 610V655M1056 610V655M1219 610V655"/>
<text class="mn" x="522" y="564">1</text><text class="mn" x="733" y="564">2</text><text class="mn" x="896" y="564">3</text><text class="mn" x="1059" y="564">4</text>
<use href="#clef" x="534" y="582.400"/><circle cx="531" cy="595" r="2"/>
<text class="ts" x="553" y="576.500">4</text><text class="ts" x="553" y="588.300">4</text>
<text class="tab" x="534" y="625">T</text><text class="tab" x="534" y="638">A</text><text class="tab" x="534" y="651">B</text>
<text class="trk" transform="translate(510 607) rotate(-90)">音轨 1</text>

<use href="#sh" x="574" y="552"/><use href="#h" x="581.500" y="552.300"/><rect x="577" y="552" width="1.200" height="22"/><circle cx="590" cy="550" r="1"/><path class="led" d="M576 558.700h11"/>
<use href="#h" x="634" y="558.500"/><rect x="631" y="558" width="1.200" height="21"/><circle cx="643.500" cy="556" r="1"/><path class="led" d="M628 558.700h12"/>
<path d="M647 552Q665 546 683 553Q665 548 647 552z"/>
<use href="#h" x="689" y="558.500"/><rect x="685" y="558" width="1.200" height="21"/><path class="led" d="M683 558.700h12"/>
<use href="#sh" x="742" y="552"/><use href="#h" x="750" y="552.300"/><rect x="746" y="552" width="1.200" height="22"/><circle cx="759" cy="550" r="1"/><path class="led" d="M745 558.700h11"/>
<use href="#h" x="803" y="558.500"/><rect x="800" y="558" width="1.200" height="21"/><circle cx="812" cy="556" r="1"/><path class="led" d="M797 558.700h12"/>
<path d="M816 552Q834 546 852 553Q834 548 816 552z"/>
<use href="#h" x="857.500" y="558.500"/><rect x="854" y="558" width="1.200" height="21"/><path class="led" d="M852 558.700h12"/>
<use href="#sh" x="905" y="552"/><use href="#h" x="912.500" y="552.300"/><rect x="908.500" y="552" width="1.200" height="22"/><circle cx="921" cy="550" r="1"/><path class="led" d="M907 558.700h11"/>
<use href="#h" x="966" y="558.500"/><rect x="962.500" y="558" width="1.200" height="21"/><circle cx="975" cy="556" r="1"/><path class="led" d="M960 558.700h12"/>
<path d="M978 552Q996 546 1014 553Q996 548 978 552z"/>
<use href="#h" x="1020" y="558.500"/><rect x="1016.500" y="558" width="1.200" height="21"/><path class="led" d="M1014 558.700h12"/>
<use href="#sh" x="1068" y="552"/><use href="#h" x="1075.500" y="552.300"/><rect x="1071.500" y="552" width="1.200" height="22"/><circle cx="1085" cy="550" r="1"/><path class="led" d="M1070 558.700h11"/>
<use href="#h" x="1130" y="552"/><rect x="1126" y="552" width="1.200" height="22"/><circle cx="1140" cy="550" r="1"/><path class="led" d="M1124 558.700h12"/>
<use href="#h" x="1183.500" y="547"/><rect x="1179.500" y="547" width="1.200" height="28"/><path class="led" d="M1178 552.800h11M1178 558.700h11"/>

<g class="t1">
<text class="tn" x="580" y="613.500">9</text><text class="tn" x="634" y="622.500">10</text>
<text class="tn" x="749" y="613.500">9</text><text class="tn" x="803" y="622.500">10</text>
<text class="tn" x="912" y="613.500">9</text><text class="tn" x="966" y="622.500">10</text>
<text class="tn" x="1075" y="613.500">9</text><text class="tn" x="1128" y="613.500">10</text><text class="tn" x="1182" y="613.500">12</text>
</g>

<text class="trk" transform="translate(510 763) rotate(-90)">音轨 2</text>
<path class="brk" d="M514 701h3v110h-3z"/><path d="M517 701l3-2" stroke="#000" fill="none"/>
<path class="stf" d="M519 706.700H1219M519 712.700H1219M519 718.700H1219M519 724.700H1219M519 730.700H1219M519 776.700H1219M519 785.700H1219M519 794.700H1219M519 803.700H1219"/>
<path class="bln" d="M731.500 706.700V730.700M893.500 706.700V730.700M1056 706.700V730.700M1219 706.700V730.700M731.500 776.700V811M893.500 776.700V811M1056 776.700V811M1219 776.700V811"/>
<text class="mn" x="522" y="706">1</text><text class="mn" x="733" y="706">2</text><text class="mn" x="896" y="706">3</text><text class="mn" x="1059" y="706">4</text>
<use href="#clef" x="534" y="724.700"/><circle cx="531" cy="737" r="2"/>
<text class="ts" x="553" y="718.700">4</text><text class="ts" x="553" y="730.700">4</text>
<text class="tab" x="534" y="791">T</text><text class="tab" x="534" y="805">A</text><text class="tab" x="534" y="819">B</text>
<text class="nm" x="617" y="689">D7M</text><text class="nm" x="948" y="689">D7M</text>
<use href="#barA"/><use href="#barB"/><use href="#barA" x="332"/><use href="#barB" x="325"/>
</svg>
</div>
</main>

<footer class="bottom">
<div class="strip"></div>
<div class="row tbr1">
<div class="tb">
<i class="grip w4"></i><span class="btn"><svg class="i"><use href="#am"/></svg></span><span class="btn txt">TXT</span><span class="btn"><svg class="i"><use href="#mix"/></svg></span><i class="sep"></i>
<span class="btn"><svg class="i"><use href="#hand"/></svg></span><b class="caret lt w8"></b><span class="btn"><svg class="i"><use href="#hand"/></svg></span><b class="caret lt w8"></b><i class="sep"></i>
<span class="btn"><svg class="i"><use href="#up"/></svg></span><span class="btn"><svg class="i"><use href="#dn"/></svg></span><i class="sep"></i>
<span class="btn"><svg class="i"><use href="#vv2"/></svg></span><span class="btn"><svg class="i"><use href="#dn2"/></svg></span><i class="w4"></i>
</div>
</div>
<div class="row">
<div class="tb">
<i class="w3"></i>
<span class="btn"><svg class="i"><use href="#acc"/></svg></span><span class="btn"><svg class="i"><use href="#mar"/></svg></span><span class="btn lr">let<br>ring</span>
<span class="btn nh"><span>N.H.</span><svg class="i"><use href="#dia"/></svg></span><span class="btn nh"><span>A.H.</span><svg class="i"><use href="#dia"/></svg></span><i class="w1"></i><i class="sep"></i>
<span class="btn"><svg class="i"><use href="#ho"/></svg></span><span class="btn"><svg class="i"><use href="#arr"/></svg></span><span class="btn"><svg class="i"><use href="#xv"/></svg></span><span class="btn"><svg class="i"><use href="#arc13"/></svg></span><span class="btn frac">1/3</span><span class="btn frac">/3</span><b class="caret w8"></b>
<span class="btn"><svg class="i"><use href="#w1"/></svg></span><span class="btn"><svg class="i"><use href="#w2"/></svg></span><i class="w2"></i><i class="sep"></i>
<span class="btn tril">tr</span><span class="btn"><svg class="i"><use href="#trem"/></svg></span><b class="caret lt w8"></b><span class="btn pm">P.M</span><span class="btn"><svg class="i"><use href="#nt"/></svg></span><i class="sep"></i>
<span class="btn tsp">T</span><span class="btn tsp">S</span><span class="btn tsp">P</span><i class="sep"></i>
<span class="btn ltt">&lt;</span><span class="btn w22"><svg class="i"><use href="#ped"/></svg></span><b class="caret w8"></b><i class="w4"></i>
</div>
</div>
<div class="slider"><div class="sl-in"><b class="sl-c"></b><b class="sl-d"></b><b class="sl-c"></b></div></div>

<div class="tracks">
<div class="tbl">
<div class="hd"><span></span><span class="sm">S M</span><span class="pt">端口</span><span class="la">Ch</span><span class="la">Ch2</span><span>乐器</span><span class="ls">音量</span><span class="ls">左右平衡</span><span>和</span><span>回</span><span>相</span><span>颤</span></div>
<div class="tr"><b class="no">1</b><span class="mt"><i></i><i></i></span><span>1</span><span>1</span><span>2</span><span class="ins">25 - Acoustic Guitar (steel)</span><span class="sld vol"><em class="thumb t13">13</em></span><span class="sld pan"><em class="thumb">0</em></span><span>0</span><span>0</span><span>0</span><span>0</span></div>
<div class="tr"><b class="no">2</b><span class="mt"><i></i><i></i></span><span>1</span><span>3</span><span>4</span><span class="ins">25 - Acoustic Guitar (steel)</span><span class="sld vol"><em class="thumb t11">11</em></span><span class="sld pan"><em class="thumb">0</em></span><span>0</span><span>0</span><span>0</span><span>0</span></div>
</div>
<div class="ctl"><b></b><b></b></div>
<div class="tl">
<div class="nums"><span>130</span><span>131</span><span>132</span><span>133</span><span>134</span><span>135</span><span>136</span><span>137</span><span>138</span><span>139</span><span>140</span><span>141</span><span>142</span><span>143</span><span>144</span><span>145</span><span>146</span><span>147</span><span>148</span><span>149</span><span>150</span><span>151</span><span>152</span><span>153</span><span>154</span><span>155</span><span>156</span><span>157</span><span>158</span><span>159</span><span>160</span><span>161</span><span>162</span><span>163</span><span>164</span><span>165</span><span>166</span><span>167</span><span>168</span><span>169</span><span>170</span><span>171</span><span>172</span><span>173</span><span>174</span><span>175</span><span>176</span><span>177</span><span>178</span><span>179</span><span>180</span><span>181</span></div>
<div class="cells"></div>
</div>
</div>
</footer>
</body>
</html>
```

FILE: styles.css
```css
*{box-sizing:border-box}
html,body{margin:0;height:100%}
body{width:1512px;height:945px;overflow:hidden;display:flex;flex-direction:column;background:#f0f0f0;font-family:"Liberation Sans","DejaVu Sans",sans-serif;color:#222}
.sprite{position:absolute;width:0;height:0;overflow:hidden}

.top{height:161px;flex:none;padding-top:1px;background:#f0f0f0;border-top:1px solid #aaa}
.row{display:flex;height:27px;flex:none}
.row:first-child{height:26px}
.tb{display:flex;align-items:center;height:100%;box-shadow:inset -1px -1px #a8a8a8,inset 0 1px #fafafa;background:#f0f0f0;flex:none}
.p1{padding-left:1px}
.btn{flex:none;width:23px;height:24px;display:flex;align-items:center;justify-content:center;overflow:hidden}
.btn.on{background:#fbfbfb;box-shadow:inset 1px 1px #a0a0a0,inset -1px -1px #fff}
.i{width:20px;height:20px;display:block;flex:none}
.sep{flex:none;width:6px;height:22px;background:linear-gradient(#acacac,#acacac) center/1px 100% no-repeat}
.grip{flex:none;height:22px;background:linear-gradient(#acacac,#acacac) 70% 50%/1px 100% no-repeat}
.caret{flex:none;display:block;height:4px;background:conic-gradient(from 315deg at 50% 100%,#111 0 90deg,transparent 90deg) center/8px 4px no-repeat}
.caret.lt{background:conic-gradient(from 315deg at 50% 100%,#aaa 0 90deg,transparent 90deg) center/8px 4px no-repeat}
.w1{flex:none;width:1px}.w2{flex:none;width:2px}.w3{flex:none;width:3px}.w4{flex:none;width:4px}.w5{flex:none;width:5px}.w6{flex:none;width:6px}.w7{flex:none;width:7px}.w8{flex:none;width:8px}.w10{flex:none;width:10px}.w11{width:11px}.w22{width:22px}
.combo{flex:none;width:50px;height:21px;background:#fff;display:flex;align-items:center;justify-content:space-between;padding:0 3px;font-size:12.5px;color:#333}
.pg{flex:none;width:12px;text-align:center;color:#777;font-size:15px}
.pgn{flex:none;width:14px;height:24px;line-height:24px;text-align:center;font-size:12px;color:#222}
.pgn.on{background:#fbfbfb;box-shadow:inset 1px 1px #a0a0a0}
.para{font:bold 14px "Liberation Serif",serif;color:#0d4f86}
.tempo{flex:none;width:109px;display:flex;align-items:center;padding-left:6px;font-size:13px;color:#222}
.qn{font:16px "DejaVu Sans",sans-serif}
.mul{margin-left:11px;margin-right:6px}
.onclip{height:24px;background:#fbfbfb}
.pct{flex:none;width:44px;font-size:13px;color:#222;text-align:center}
.oct{font:italic bold 11px "Liberation Serif",serif;color:#2a4a70}
.oc2{font:italic bold 9.5px/9px "Liberation Serif",serif;color:#2a4a70;text-align:center}
.dyn{margin-left:73px;box-shadow:inset -1px -1px #a8a8a8,inset 0 1px #fafafa,inset 1px 0 #fafafa}
.dy{font:italic bold 10px "Liberation Serif",serif;color:#aaa}

.piano{width:515px;height:78px;border-right:2px solid #a8a8a8;position:relative}
.phead{height:21px;display:flex;align-items:center;font-size:11px;color:#333;padding-bottom:1px}
.p-l{flex:none;width:147px;border-right:1px solid #aaa;height:19px;line-height:19px}
.p-c{margin-left:6px;flex:1}
.p-s{margin-right:15px}
.q{margin-right:-5px}
.keys{height:55px;width:511px;position:relative;border-bottom:1px solid #555;
background:
linear-gradient(90deg,#111 0 1px,transparent 1px 17px,#0a0a0a 17px,#666 21px,#0a0a0a 25px,transparent 25px 29px,#0a0a0a 29px,#666 33px,#0a0a0a 37px,transparent 37px 53px,#0a0a0a 53px,#666 57px,#0a0a0a 61px,transparent 61px 65px,#0a0a0a 65px,#666 69px,#0a0a0a 73px,transparent 73px 77px,#0a0a0a 77px,#666 81px,#0a0a0a 84px) 0 0/84px 31px repeat-x,
linear-gradient(90deg,#fff 11px,#666 11px) -2px 0/12px 100% repeat-x}
.mark{position:absolute;left:181px;top:36px;width:5px;height:5px;border:1px solid #222;background:#fff}

.score{flex:none;height:650px;background:#a0a0a0;display:flex;padding:11px 0 0 462px;overflow:hidden}
.page{width:792px;height:639px;background:#fff;border:1px solid #000;border-bottom:0;flex:none}
.sheet{display:block;width:790px;height:638px;font-family:"Liberation Serif",serif}
.title{font:300 38px "Noto Sans CJK SC",sans-serif;text-anchor:middle;fill:#000}
.sub{font:300 18px "Noto Sans CJK SC",sans-serif;text-anchor:middle;fill:#111}
.mus{font:13.5px "Liberation Serif",serif;fill:#222}
.cre{font:300 14.800px "Noto Sans CJK SC",sans-serif;fill:#000}
.nm{font:11.500px "Liberation Serif",serif;text-anchor:middle;fill:#222}
.fr{font:9.500px "Liberation Serif",serif;text-anchor:middle;fill:#222}
.lb{font:10px "Liberation Serif",serif;text-anchor:middle;fill:#222;letter-spacing:.8px}
.bd{font:bold 12px "Liberation Serif",serif;fill:#111}
.bd.sp{letter-spacing:.25px}
.bdc{font:bold 13px "Noto Sans CJK SC",sans-serif;fill:#111}
.red{fill:#d40000}
.brk{fill:#000}
.stf{stroke:#9a9a9a;stroke-width:1;fill:none}
.bln{stroke:#000;stroke-width:1;fill:none}
.led{stroke:#777;stroke-width:.8;fill:none}
.mn{font:9px "Liberation Sans",sans-serif;fill:#d23b3b}
.ts{font:bold 14px "DejaVu Serif",serif;text-anchor:middle;fill:#000}
.tab{font:bold 15px "Liberation Sans",sans-serif;text-anchor:middle;fill:#000}
.trk{font:12px "Noto Sans CJK SC",sans-serif;fill:#808080;text-anchor:middle}
.tn{font:10.500px "Liberation Sans",sans-serif;text-anchor:middle;fill:#333;stroke:#fff;stroke-width:3px;paint-order:stroke}
.svt{font:8px "Liberation Sans",sans-serif;fill:#0d4f86}
.svs{font:bold 6px "Liberation Sans",sans-serif;text-anchor:middle;fill:#999}
.svg5{font:8px "Liberation Sans",sans-serif;text-anchor:middle;fill:#999}
.svt3{font:8px "Liberation Mono",monospace;text-anchor:middle;fill:#143a60}
.sva{font:6px "Liberation Mono",monospace;text-anchor:middle;fill:#999}
.svb{font:6px "Liberation Mono",monospace;text-anchor:middle;fill:#143a60}
.svq{font:bold 12px "Liberation Sans",sans-serif;text-anchor:middle;fill:#000}
.svam{font:bold 9px "Liberation Serif",serif;text-anchor:middle;fill:#1a4a7a}
.svho{font:bold 7px "Liberation Mono",monospace;text-anchor:middle;fill:#143a60}

.bottom{flex:1;display:flex;flex-direction:column;min-height:0;background:#f0f0f0}
.strip{height:17px;flex:none;border-bottom:1px solid #fff}
.tbr1{height:26px;padding-left:546px}
.txt{font:10px "Liberation Serif",serif;color:#0d5a8e}
.lr{font:italic 8px/7px "Liberation Serif",serif;color:#999;text-align:center;display:block;padding-top:5px}
.nh{flex-direction:column;font:8px "Liberation Serif",serif;color:#999;justify-content:flex-start;padding-top:3px}
.nh .i{margin-top:-7px;width:14px;height:14px}
.frac{font:8.500px "Liberation Mono",monospace;color:#143a60;font-weight:700}
.tril{font:italic bold 12px "Liberation Serif",serif;color:#143a60}
.pm{width:24px;font:bold 10px "Liberation Serif",serif;color:#143a60}
.tsp{font:bold 10px "Liberation Serif",serif;color:#143a60}
.ltt{font:15px "Liberation Serif",serif;color:#143a60}
.slider{flex:none;height:9px;border-bottom:1px solid #a8a8a8;padding-left:484px}
.sl-in{width:767px;height:8px;border:1px solid #a8a8a8;background:#fff;display:flex;align-items:center;padding:0 3px}
.sl-c{flex:none;display:block;width:7px;height:4px;background:conic-gradient(from 315deg at 50% 100%,#5f8fc0 0 90deg,transparent 90deg)}
.sl-d{flex:1;height:1px;margin:0 2px;background:repeating-linear-gradient(90deg,#6a96c4 0 1px,transparent 1px 4px)}

.tracks{flex:1;display:flex;min-height:0;overflow:hidden}
.tbl{flex:none;width:476px;font-size:12px;color:#222}
.hd,.tr{display:grid;grid-template-columns:8px 30px 23px 23px 24px 142px 70px 68px 22px 23px 23px 20px;align-items:center;text-align:center}
.hd{height:26px;font:13px/18px "Noto Sans CJK SC",sans-serif;color:#222;padding-top:3px}
.hd span{white-space:nowrap}
.hd .pt{font-size:12px}
.hd .la{font:11.500px/18px "Liberation Sans",sans-serif}
.sm{font-size:11px;font-family:"Liberation Sans",sans-serif;word-spacing:1px;padding-left:6px;text-align:left}
.ls{letter-spacing:1px}
.tr{height:20px;background:linear-gradient(#fff 0,#eee 30%,#a8a8a8 100%);border-top:1px solid #d0d0d0}
.tr>*{height:19px;line-height:19px;border-right:1px solid #fff}
.no{font-size:12px;text-align:left;border:0}
.mt{display:flex;align-items:center;justify-content:center;gap:1px}
.mt i{width:12px;height:12px;background:#eee;border:1px solid #fff}
.ins{text-align:left;padding-left:3px;font-size:10.700px;white-space:nowrap;overflow:hidden;color:#333}
.sld{position:relative;display:block}
.sld::before{content:"";position:absolute;left:5px;right:8px;top:7px;height:4px}
.vol::before{background:#d2560a}
.pan::before{background:#dcdc14;height:5px;left:1px;right:7px}
.thumb{position:absolute;top:3px;left:25px;width:14px;height:13px;border:1px solid #000;background:#f2f2f2;font:normal 8.500px/11px "Liberation Sans",sans-serif;color:#111;text-align:center}
.t13{left:41px}.t11{left:35px}
.ctl{flex:none;width:7px;display:flex;flex-direction:column;padding-top:33px;gap:13px;align-items:center}
.ctl b{display:block;width:0;height:0;border:3px solid transparent;border-right-color:#4d8cc2;border-left:0}
.tl{flex:1;min-width:0}
.nums{height:27px;display:flex;padding-top:16px}
.nums span{flex:none;width:20px;font-size:8.800px;line-height:10px;text-align:center;color:#222}
.cells{height:40px;background:linear-gradient(90deg,#ececec 1px,transparent 1px) 0 0/20px 100% repeat-x,linear-gradient(#f00 0,#f00 50%,#a40000 92%,#ececec 92%) 0 0/100% 20px repeat-y}
```
